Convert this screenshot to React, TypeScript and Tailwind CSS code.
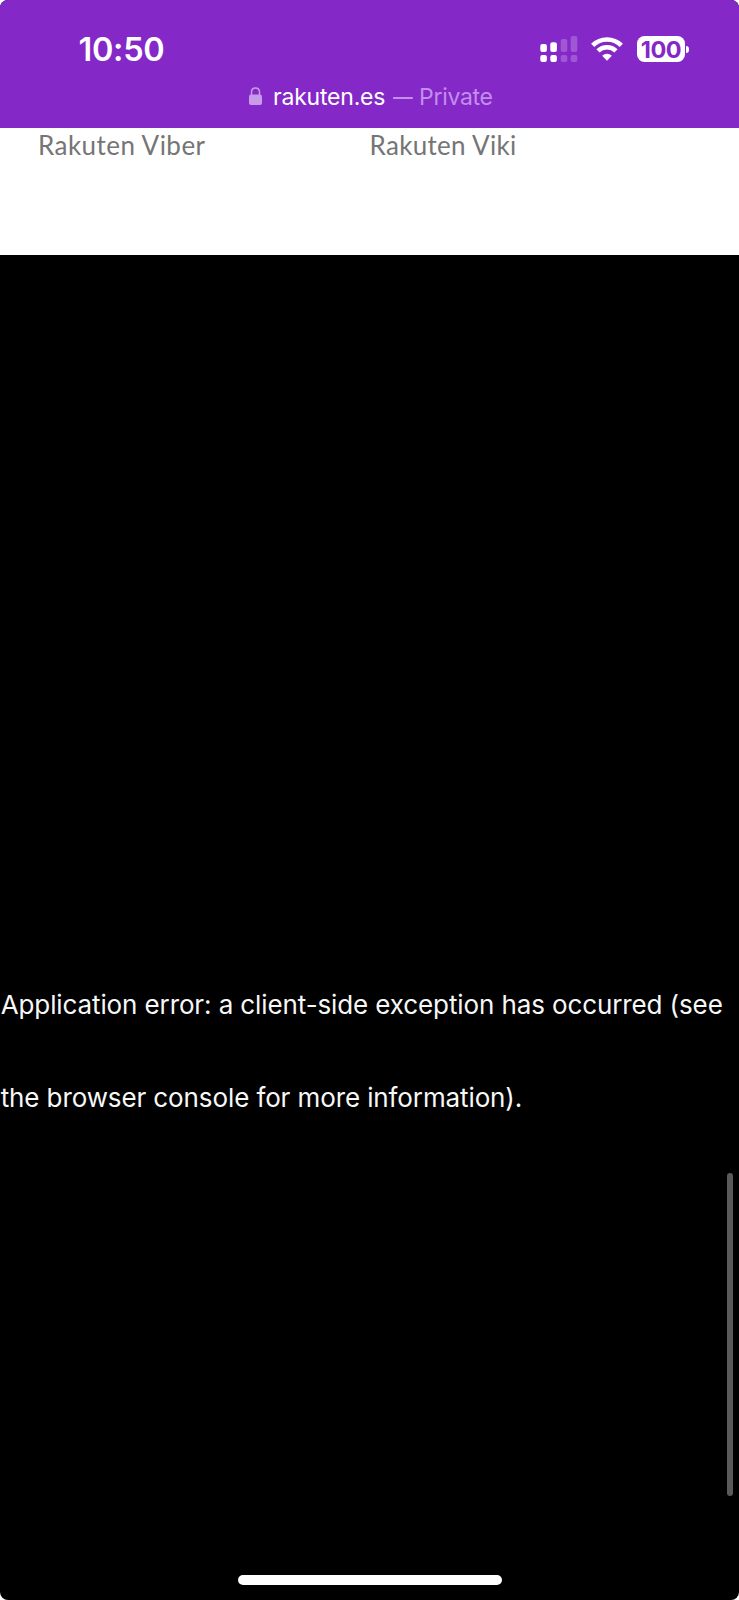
function SignalIcon() {
  return (
    <svg width="38" height="27" viewBox="0 0 38 27" className="block" fill="#fff">
      <rect x="0.3" y="8" width="6.6" height="8" rx="2" />
      <rect x="10.3" y="6.2" width="6.6" height="9.8" rx="2" />
      <rect x="20.7" y="3" width="6.6" height="13" rx="2" fillOpacity="0.22" />
      <rect x="30.7" y="0" width="6.6" height="16" rx="2" fillOpacity="0.22" />
      <rect x="0.3" y="19" width="6.6" height="7" rx="2" />
      <rect x="10.3" y="19" width="6.6" height="7" rx="2" />
      <rect x="20.7" y="19" width="6.6" height="7" rx="2" fillOpacity="0.22" />
      <rect x="30.7" y="19" width="6.6" height="7" rx="2" fillOpacity="0.22" />
    </svg>
  );
}

function WifiIcon() {
  return (
    <svg width="32" height="25" viewBox="0 0 32 25" className="block" fill="none" stroke="#fff" strokeWidth="4.6">
      <path d="M1.7 9.3A20.4 20.4 0 0 1 30.3 9.3" />
      <path d="M7 14.9A12.8 12.8 0 0 1 25 14.9" />
      <path d="M16 24.8L11.2 19.7A6.9 6.9 0 0 1 20.8 19.7Z" fill="#fff" stroke="none" />
    </svg>
  );
}

function LockIcon() {
  return (
    <svg width="13" height="19" viewBox="0 0 13 19" className="block">
      <rect x="0" y="7.5" width="13" height="10.5" rx="2" fill="#c89be8" />
      <path d="M2.5 9V5.2C2.5 2.4 4.2 0.9 6.5 0.9S10.5 2.4 10.5 5.2V9" fill="none" stroke="#c89be8" strokeWidth="1.5" />
    </svg>
  );
}

export default function App() {
  return (
    <div className="h-[1600px] w-[739px] overflow-hidden bg-white font-['Inter',sans-serif]">
      <div className="relative flex h-full flex-col overflow-hidden rounded-[8px] bg-black">
        <header className="h-[127.6px] shrink-0 bg-[#8528c8] text-white">
          <div className="flex h-[81px] items-start pt-[36px] pl-[78px]">
            <div className="mt-[-3px] w-[462px] pl-[0.5px] text-[32.5px] leading-[33px] font-semibold tracking-[-0.3px]">10:50</div>
            <SignalIcon />
            <div className="ml-[13px]">
              <WifiIcon />
            </div>
            <div className="ml-[14px] flex items-center">
              <div className="flex h-[26px] w-[48px] items-center justify-center rounded-[7.5px] bg-white pt-px text-[23.5px] leading-[24px] font-bold tracking-[-0.5px] text-[#8528c8]">
                100
              </div>
              <div className="ml-px h-[7px] w-[3px] rounded-r-full bg-white" />
            </div>
          </div>
          <div className="flex items-start pl-[249px]">
            <div className="mt-[6px]">
              <LockIcon />
            </div>
            <p className="ml-[11px] text-[23px] leading-[32px] tracking-[-0.2px] whitespace-nowrap">
              rakuten.es{" "}
              <span className="ml-px text-[#c38eec]">
                <span className="inline-block origin-left scale-x-[0.86] tracking-[-2.8px]">—</span> <span className="tracking-[-0.3px]">Private</span>
              </span>
            </p>
          </div>
        </header>
        <section className="grid h-[127.4px] shrink-0 grid-cols-[331.5px_1fr] bg-white pl-[38px] font-['Lato',sans-serif] text-[26px] leading-[35px] tracking-[0.46px] text-[#757575]">
          <p>Rakuten Viber</p>
          <p className="tracking-[0.32px]">Rakuten Viki</p>
        </section>
        <main className="flex grow flex-col pt-[703.5px] pl-[0.7px] text-[26px] leading-[93px] tracking-[-0.11px] whitespace-nowrap text-[#f7f7f7]">
          <p>Application error: a client-side exception has occurred (see</p>
          <p>the browser console for more information).</p>
        </main>
        <div className="absolute top-[1173px] right-[6px] h-[323px] w-[6px] rounded-full bg-[#5a5a5a]" />
        <div className="absolute bottom-[15px] left-[238px] h-[10px] w-[263.5px] rounded-full bg-white" />
      </div>
    </div>
  );
}
